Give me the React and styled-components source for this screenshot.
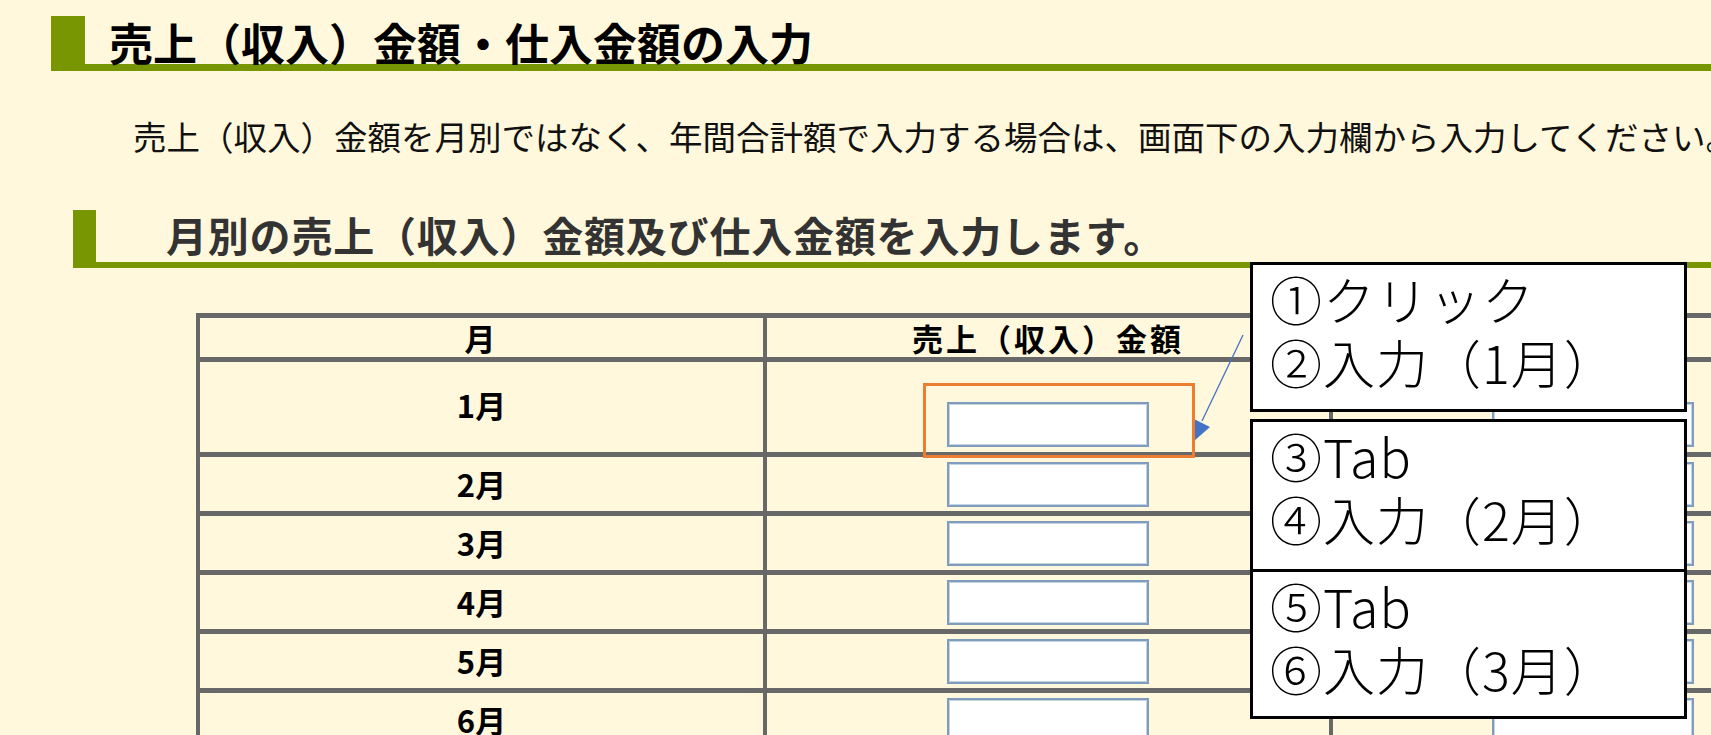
import React from "react";
import styled, { createGlobalStyle } from "styled-components";

const GlobalStyle = createGlobalStyle`
    html, body {
        margin: 0;
        padding: 0;
        background-color: #fff8dc;
        overflow: hidden;
    }

    body {
        font-family: "Noto Sans CJK JP", "Noto Sans", sans-serif;
        color: #000;
    }
`;

const GREEN = "#779602";
const LINE = "#686868";

const Page = styled.div`
    position: relative;
    width: 1711px;
    height: 735px;
    padding-top: 16px;
    box-sizing: border-box;
    overflow: hidden;
`;

const MainTitle = styled.h1`
    margin: 0 0 0 51px;
    height: 43px;
    padding: 5px 0 0 24px;
    border-left: 34px solid ${GREEN};
    border-bottom: 7px solid ${GREEN};
    font-size: 44px;
    font-weight: 700;
    line-height: 42px;
    white-space: nowrap;
`;

const Lead = styled.p`
    margin: 45px 0 0 133px;
    font-size: 33.5px;
    line-height: 40px;
    white-space: nowrap;
    color: #111;
`;

const SectionTitle = styled.h2`
    margin: 54px 0 0 73px;
    height: 52px;
    padding-left: 70px;
    border-left: 23px solid ${GREEN};
    border-bottom: 6px solid ${GREEN};
    font-size: 41px;
    font-weight: 700;
    letter-spacing: 0.8px;
    line-height: 48px;
    color: #333;
    white-space: nowrap;
`;

const Board = styled.div`
    display: grid;
    grid-template-columns: 567px 566px 524px;
    grid-template-rows: 44px 95px repeat(11, 59px);
    width: max-content;
    margin: 45px 0 0 196px;
    border-top: 5px solid ${LINE};
    border-left: 4px solid ${LINE};
`;

const Cell = styled.div`
    display: flex;
    justify-content: center;
    align-items: ${(props) => (props.tall ? "flex-end" : "center")};
    padding-bottom: ${(props) => (props.tall ? "5px" : "0")};
    box-sizing: border-box;
    border-right: 4px solid ${LINE};
    border-bottom: 5px solid ${LINE};
    font-size: 31px;
    font-weight: 700;
    letter-spacing: ${(props) => (props.head ? "3px" : "0")};
    white-space: nowrap;
`;

const MonthLabel = styled.span`
    align-self: center;
    line-height: 40px;
`;

const AmountInput = styled.input`
    width: 202px;
    height: 45px;
    box-sizing: border-box;
    padding: 0 6px;
    border: 2px solid #7f9cbd;
    box-shadow: inset 0 0 0 1px #c3d4e6;
    background: #fff;
    font-size: 22px;
    outline: none;
`;

const Highlight = styled.div`
    position: absolute;
    left: 923px;
    top: 383px;
    width: 272px;
    height: 75px;
    box-sizing: border-box;
    border: 3px solid #ed7d31;
`;

const Pointer = styled.svg`
    position: absolute;
    left: 1185px;
    top: 330px;
    overflow: visible;
`;

const Callouts = styled.div`
    position: absolute;
    left: 1250px;
    top: 262px;
    width: 437px;
    display: flex;
    flex-direction: column;
    gap: 7px;
`;

const CalloutBox = styled.div`
    display: flex;
    flex-direction: column;
    background: #fff;
    border: 3px solid #000;
`;

const Note = styled.div`
    height: ${(props) => props.h}px;
    padding: 2px 0 0 17px;
    box-sizing: border-box;
    border-top: ${(props) => (props.divided ? "3px solid #000" : "none")};
    font-size: 52px;
    font-weight: 300;
    letter-spacing: 1px;
    line-height: 63px;
    white-space: nowrap;
`;

const months = Array.from({ length: 12 }, (_, i) => `${i + 1}月`);

const App = () => {
    return (
        <>
            <GlobalStyle />
            <Page>
                <MainTitle>売上（収入）金額・仕入金額の入力</MainTitle>
                <Lead>
                    売上（収入）金額を月別ではなく、年間合計額で入力する場合は、画面下の入力欄から入力してください。
                </Lead>
                <SectionTitle>月別の売上（収入）金額及び仕入金額を入力します。</SectionTitle>

                <Board>
                    <Cell head>月</Cell>
                    <Cell head>売上（収入）金額</Cell>
                    <Cell head>仕入金額</Cell>
                    {months.map((m, i) => (
                        <React.Fragment key={m}>
                            <Cell tall={i === 0}>
                                <MonthLabel>{m}</MonthLabel>
                            </Cell>
                            <Cell tall={i === 0}>
                                <AmountInput type="text" />
                            </Cell>
                            <Cell tall={i === 0}>
                                <AmountInput type="text" />
                            </Cell>
                        </React.Fragment>
                    ))}
                </Board>

                <Pointer width="70" height="115" viewBox="0 0 70 115">
                    <line x1="58" y1="5" x2="17" y2="91" stroke="#4472c4" strokeWidth="1.3" />
                    <polygon points="9,89 25,97 9,111" fill="#4472c4" />
                </Pointer>
                <Highlight />

                <Callouts>
                    <CalloutBox>
                        <Note h={144}>
                            ①クリック
                            <br />
                            ②入力（1月）
                        </Note>
                    </CalloutBox>
                    <CalloutBox>
                        <Note h={147}>
                            ③Tab
                            <br />
                            ④入力（2月）
                        </Note>
                        <Note h={147} divided>
                            ⑤Tab
                            <br />
                            ⑥入力（3月）
                        </Note>
                    </CalloutBox>
                </Callouts>
            </Page>
        </>
    );
};

export default App;
